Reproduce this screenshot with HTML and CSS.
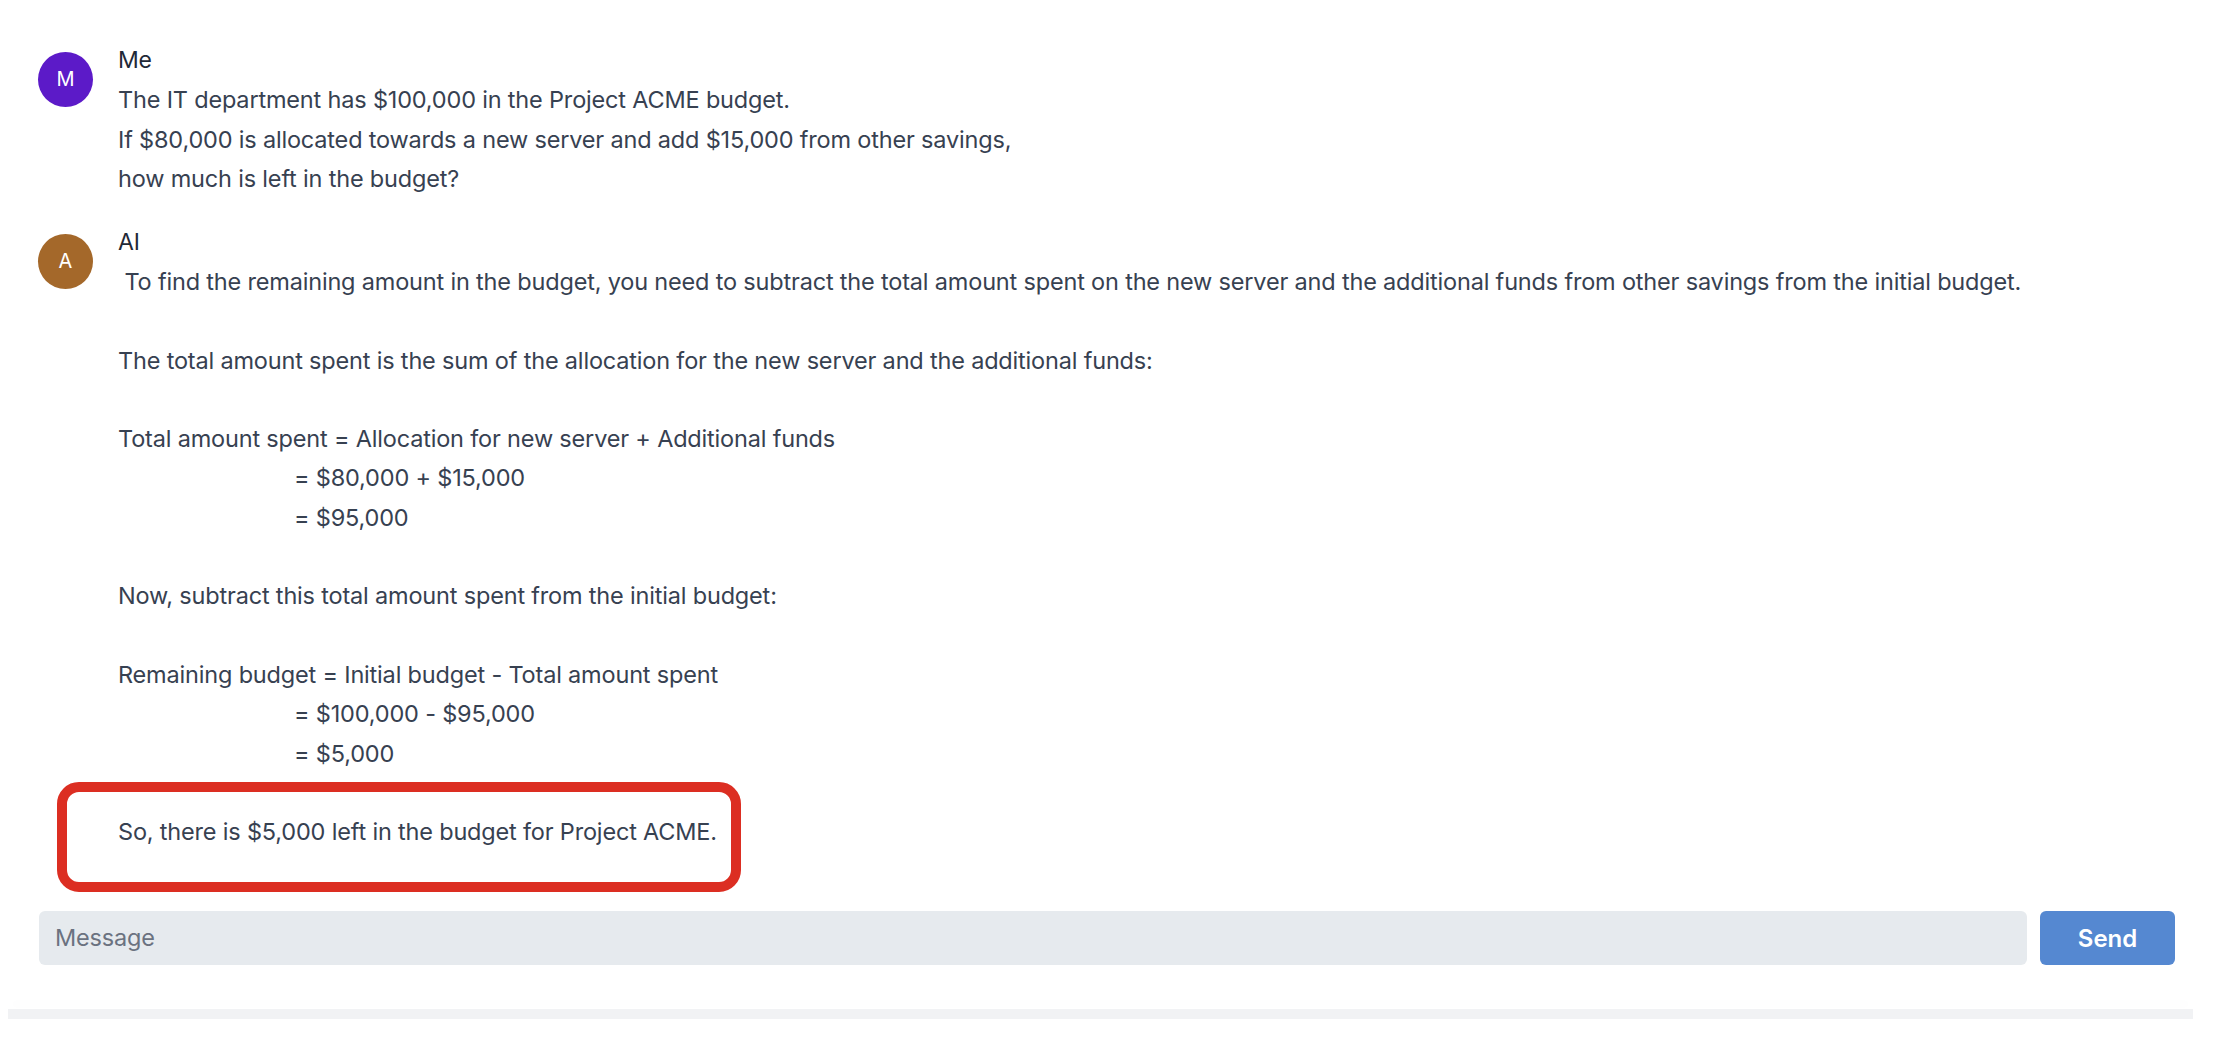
FILE: index.html
```html
<!DOCTYPE html>
<html lang="en">
<head>
<meta charset="utf-8">
<title>Chat</title>
<link rel="stylesheet" href="styles.css">
</head>
<body>
<div class="page">
  <div class="messages">
    <div class="msg">
      <div class="avatar avatar-me">M</div>
      <div class="msg-body">
        <div class="name">Me</div>
        <p class="para">The IT department has $100,000 in the Project ACME budget.<br>If $80,000 is allocated towards a new server and add $15,000 from other savings,<br>how much is left in the budget?</p>
      </div>
    </div>
    <div class="msg">
      <div class="avatar avatar-ai">A</div>
      <div class="msg-body">
        <div class="name">AI</div>
        <p class="para lead">&nbsp;To find the remaining amount in the budget, you need to subtract the total amount spent on the new server and the additional funds from other savings from the initial budget.</p>
        <p class="para">The total amount spent is the sum of the allocation for the new server and the additional funds:</p>
        <p class="para">Total amount spent = Allocation for new server + Additional funds<br><span class="indent">= $80,000 + $15,000</span><br><span class="indent">= $95,000</span></p>
        <p class="para">Now, subtract this total amount spent from the initial budget:</p>
        <p class="para">Remaining budget = Initial budget - Total amount spent<br><span class="indent">= $100,000 - $95,000</span><br><span class="indent">= $5,000</span></p>
        <p class="para highlight">So, there is $5,000 left in the budget for Project ACME.</p>
      </div>
    </div>
  </div>
  <div class="composer">
    <div class="input">Message</div>
    <button class="send">Send</button>
  </div>
</div>
<div class="scrollbar"></div>
</body>
</html>
```
FILE: styles.css
```css
html, body {
  margin: 0;
  padding: 0;
  background: #ffffff;
  overflow: hidden;
}
body {
  font-family: Inter, "Liberation Sans", sans-serif;
  font-size: 23.5px;
  letter-spacing: -0.18px;
  line-height: 39.3px;
  color: #374151;
  width: 2220px;
  height: 1062px;
}
.page {
  padding: 41px 45px 0 38px;
}
.messages {
  display: flex;
  flex-direction: column;
  gap: 24.5px;
}
.msg {
  display: flex;
  align-items: flex-start;
  gap: 25px;
}
.avatar {
  flex: 0 0 55px;
  width: 55px;
  height: 55px;
  margin-top: 11px;
  border-radius: 50%;
  color: #ffffff;
  font-size: 20px;
  letter-spacing: 0;
  line-height: 55px;
  text-align: center;
}
.avatar-me { background: #5c1ac8; }
.avatar-ai { background: #a4682a; }
.msg-body {
  flex: 1;
  min-width: 0;
}
.name {
  font-size: 23px;
  color: #1f2937;
}
.para {
  margin: 0 0 39.3px 0;
}
.para:last-child {
  margin-bottom: 0;
}
.indent {
  padding-left: 176px;
}
.highlight {
  position: relative;
}
.highlight::before {
  content: "";
  position: absolute;
  left: -61px;
  top: -30px;
  width: 684px;
  height: 110px;
  box-sizing: border-box;
  border: 10px solid #dc2e22;
  border-radius: 22px;
}
.composer {
  display: flex;
  gap: 13px;
  margin-top: 60px;
  height: 54px;
}
.input {
  flex: 1;
  margin-left: 1px;
  background: #e6eaee;
  border-radius: 6px;
  padding-left: 16px;
  color: #6b7280;
  line-height: 54px;
}
.send {
  width: 135px;
  border: none;
  border-radius: 6px;
  background: #5588d1;
  color: #ffffff;
  font-family: Inter, "Liberation Sans", sans-serif;
  font-size: 24px;
  font-weight: 600;
  padding: 0;
}
.scrollbar {
  margin: 44px 27px 0 8px;
  height: 10px;
  background: #f1f2f4;
  box-shadow: 0 -10px 12px rgba(0, 0, 0, 0.008);
}
```
